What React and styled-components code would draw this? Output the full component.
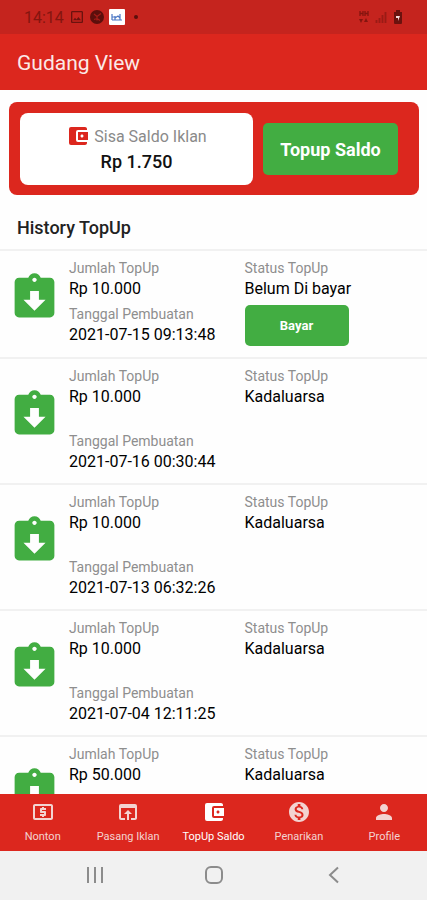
import React from "react";
import styled, { createGlobalStyle } from "styled-components";
import {
  MdAccountBalanceWallet,
  MdAssignmentReturned,
  MdLocalAtm,
  MdMonetizationOn,
  MdOpenInBrowser,
  MdPerson,
  MdOutlineImage,
} from "react-icons/md";

const history = [
  { id: 1, amount: "Rp 10.000", date: "2021-07-15 09:13:48", status: "Belum Di bayar", unpaid: true },
  { id: 2, amount: "Rp 10.000", date: "2021-07-16 00:30:44", status: "Kadaluarsa" },
  { id: 3, amount: "Rp 10.000", date: "2021-07-13 06:32:26", status: "Kadaluarsa" },
  { id: 4, amount: "Rp 10.000", date: "2021-07-04 12:11:25", status: "Kadaluarsa" },
  { id: 5, amount: "Rp 50.000", status: "Kadaluarsa" },
];

const tabs = [
  { label: "Nonton", icon: MdLocalAtm },
  { label: "Pasang Iklan", icon: MdOpenInBrowser },
  { label: "TopUp Saldo", icon: MdAccountBalanceWallet, active: true },
  { label: "Penarikan", icon: MdMonetizationOn },
  { label: "Profile", icon: MdPerson },
];

export default function App() {
  return (
    <Screen>
      <GlobalStyle />
      <StatusBar>
        <StatusGroup>
          <span>14:14</span>
          <MdOutlineImage size={16} color="#6b120e" />
          <svg width="14" height="14" viewBox="0 0 14 14">
            <circle cx="7" cy="7" r="7" fill="#5c0f0c" />
            <path d="M11 3.500 7 6.500M4 4l3 2.500v4M4 9.500l3-1 3 2" stroke="#a51d18" strokeWidth="1.200" fill="none" />
          </svg>
          <svg width="16" height="16" viewBox="0 0 16 16">
            <rect width="16" height="16" rx="1" fill="#fff" />
            <path d="M3 5v6M3 8h3M6 7v4M6 9l3-2 2 2M11 5v6M3 11h10" stroke="#4a76c4" strokeWidth="1.200" fill="none" />
          </svg>
          <StatusDot />
        </StatusGroup>
        <StatusGroup>
          <svg width="10" height="14" viewBox="0 0 10 14">
            <path d="M1 1v5M4 1v5M6 1v5M9 1v5M1 3.500h3M6 3.500h3" stroke="#84150f" strokeWidth="1.300" />
            <path d="m0 9 2 4 2-4zM5 12l2-4 2 4zM7 13V9" fill="#84150f" />
          </svg>
          <svg width="12" height="12" viewBox="0 0 12 12">
            <path d="M1.500 9v3M4.500 7v5M7.500 4v8M10.500 1v11" stroke="#9a1b15" strokeWidth="1.800" />
          </svg>
          <svg width="10" height="14" viewBox="0 0 10 14">
            <path d="M3 2V0h4v2h2v11a1 1 0 0 1-1 1H2a1 1 0 0 1-1-1V2z" fill="#6b120e" />
            <path d="M3 6h4L5 11V8H3z" fill="#f3dedd" />
          </svg>
        </StatusGroup>
      </StatusBar>
      <Header>
        <Title>Gudang View</Title>
      </Header>

      <Content>
        <Wallet>
          <Balance>
            <BalanceLabel>
              <MdAccountBalanceWallet size={24} color="#dc271e" />
              Sisa Saldo Iklan
            </BalanceLabel>
            <BalanceValue>Rp 1.750</BalanceValue>
          </Balance>
          <TopupButton type="button">Topup Saldo</TopupButton>
        </Wallet>

        <SectionTitle>History TopUp</SectionTitle>
        <List>
          {history.map((item) => (
            <HistoryItem key={item.id} {...item} />
          ))}
        </List>
      </Content>

      <BottomNav>
        {tabs.map(({ label, icon: Icon, active }) => (
          <Tab key={label} href="#" $active={active} aria-current={active ? "page" : undefined}>
            <Icon size={24} />
            {label}
          </Tab>
        ))}
      </BottomNav>
      <SystemBar>
        <SystemButton type="button" aria-label="Recent apps">
          <svg width="18" height="18" viewBox="0 0 18 18">
            <path d="M3 1v16M10 1v16M17 1v16" />
          </svg>
        </SystemButton>
        <SystemButton type="button" aria-label="Home">
          <svg width="18" height="18" viewBox="0 0 18 18">
            <rect x="1" y="1" width="16" height="16" rx="5" />
          </svg>
        </SystemButton>
        <SystemButton type="button" aria-label="Back">
          <svg width="18" height="18" viewBox="0 0 18 18">
            <path d="M14 1.500 6 9l8 7.500" />
          </svg>
        </SystemButton>
      </SystemBar>
    </Screen>
  );
}

const HistoryItem = ({ amount, date, status, unpaid }) => (
  <Item $compact={unpaid}>
    <ItemIcon>
      <MdAssignmentReturned size={53} />
    </ItemIcon>
    <Column $gap={unpaid ? "5px" : "24px"}>
      <div>
        <Label>Jumlah TopUp</Label>
        <Value>{amount}</Value>
      </div>
      {date && (
        <div>
          <Label>Tanggal Pembuatan</Label>
          <Value>{date}</Value>
        </div>
      )}
    </Column>
    <Column $gap="6px">
      <div>
        <Label>Status TopUp</Label>
        <Value>{status}</Value>
      </div>
      {unpaid && <PayButton type="button">Bayar</PayButton>}
    </Column>
  </Item>
);

const GlobalStyle = createGlobalStyle`
  * {
    box-sizing: border-box;
  }
  body {
    margin: 0;
    background: #fefefe;
    font-family: Roboto, "Liberation Sans", sans-serif;
  }
  svg {
    flex-shrink: 0;
  }
`;

const Screen = styled.div`
  display: flex;
  flex-direction: column;
  height: 100vh;
`;

const StatusBar = styled.div`
  display: flex;
  align-items: center;
  justify-content: space-between;
  flex-shrink: 0;
  height: 34px;
  padding: 0 24px;
  background: #c5241e;
  color: #84150f;
  font-size: 16px;
`;

const StatusGroup = styled.div`
  display: flex;
  align-items: center;
  gap: 5px;

  &:last-child {
    gap: 6px;
  }
`;

const StatusDot = styled.span`
  width: 4px;
  height: 4px;
  margin-left: 4px;
  border-radius: 50%;
  background: #5c0f0c;
`;

const Header = styled.header`
  display: flex;
  align-items: center;
  flex-shrink: 0;
  height: 56px;
  padding: 2px 17px 0;
  background: #dc271e;
`;

const Title = styled.h1`
  margin: 0;
  color: #fbe9e7;
  font-size: 21px;
  font-weight: 400;
`;

const Content = styled.main`
  display: flex;
  flex-direction: column;
  flex: 1;
  min-height: 0;
`;

const Wallet = styled.section`
  display: flex;
  align-items: center;
  flex-shrink: 0;
  gap: 10px;
  margin: 12px 8px 0 9px;
  padding: 11px 21px 10px 11px;
  border-radius: 8px;
  background: #dc271e;
`;

const Balance = styled.div`
  flex: 233;
  padding: 9px 0 11px;
  border-radius: 8px;
  background: #fff;
  text-align: center;
`;

const BalanceLabel = styled.div`
  display: flex;
  align-items: center;
  justify-content: center;
  gap: 4px;
  height: 28px;
  color: #8a8a8a;
  font-size: 16px;
`;

const BalanceValue = styled.div`
  color: #111;
  font-size: 18px;
  font-weight: 500;
  line-height: 24px;
`;

const Button = styled.button`
  border: 0;
  border-radius: 5px;
  background: #42ad42;
  color: #fff;
  font-family: inherit;
  font-weight: 700;
`;

const TopupButton = styled(Button)`
  flex: 135;
  height: 52px;
  padding: 0;
  font-size: 18px;
`;

const PayButton = styled(Button)`
  width: 104px;
  height: 41px;
  font-size: 13px;
`;

const SectionTitle = styled.h2`
  flex-shrink: 0;
  margin: 21px 17px 9px;
  color: #222;
  font-size: 18px;
  font-weight: 500;
  line-height: 24px;
`;

const List = styled.ul`
  flex: 1;
  min-height: 0;
  margin: 0;
  padding: 0;
  overflow-y: auto;
  scrollbar-width: none;
  list-style: none;
`;

const Item = styled.li`
  display: grid;
  grid-template-columns: 61px 175fr 174fr;
  min-height: ${(props) => (props.$compact ? "108px" : "126px")};
  padding: 7px 8px 11px;
  border-top: 2px solid #f1f1f1;
`;

const ItemIcon = styled.div`
  display: flex;
  align-items: center;
  padding-bottom: 9px;
  color: #42ad42;
`;

const Column = styled.div`
  display: flex;
  flex-direction: column;
  gap: ${(props) => props.$gap};
`;

const Label = styled.div`
  color: #8e8e8e;
  font-size: 14px;
  line-height: 20px;
`;

const Value = styled.div`
  color: #000;
  font-size: 16px;
  line-height: 21px;
`;

const BottomNav = styled.nav`
  display: flex;
  flex-shrink: 0;
  height: 57px;
  background: #dc271e;
`;

const Tab = styled.a`
  display: flex;
  flex: 1;
  flex-direction: column;
  align-items: center;
  gap: 6px;
  padding-top: 6px;
  color: ${(props) => (props.$active ? "#fff" : "#f3d3d1")};
  font-size: 11px;
  line-height: 14px;
  text-decoration: none;
  white-space: nowrap;
`;

const SystemBar = styled.div`
  display: flex;
  flex-shrink: 0;
  height: 49px;
  padding: 0 34px 2px;
  background: #f1f1f1;
`;

const SystemButton = styled.button`
  display: flex;
  flex: 1;
  align-items: center;
  justify-content: center;
  border: 0;
  background: none;

  svg {
    fill: none;
    stroke: #8c8c8c;
    stroke-width: 2;
  }
`;
